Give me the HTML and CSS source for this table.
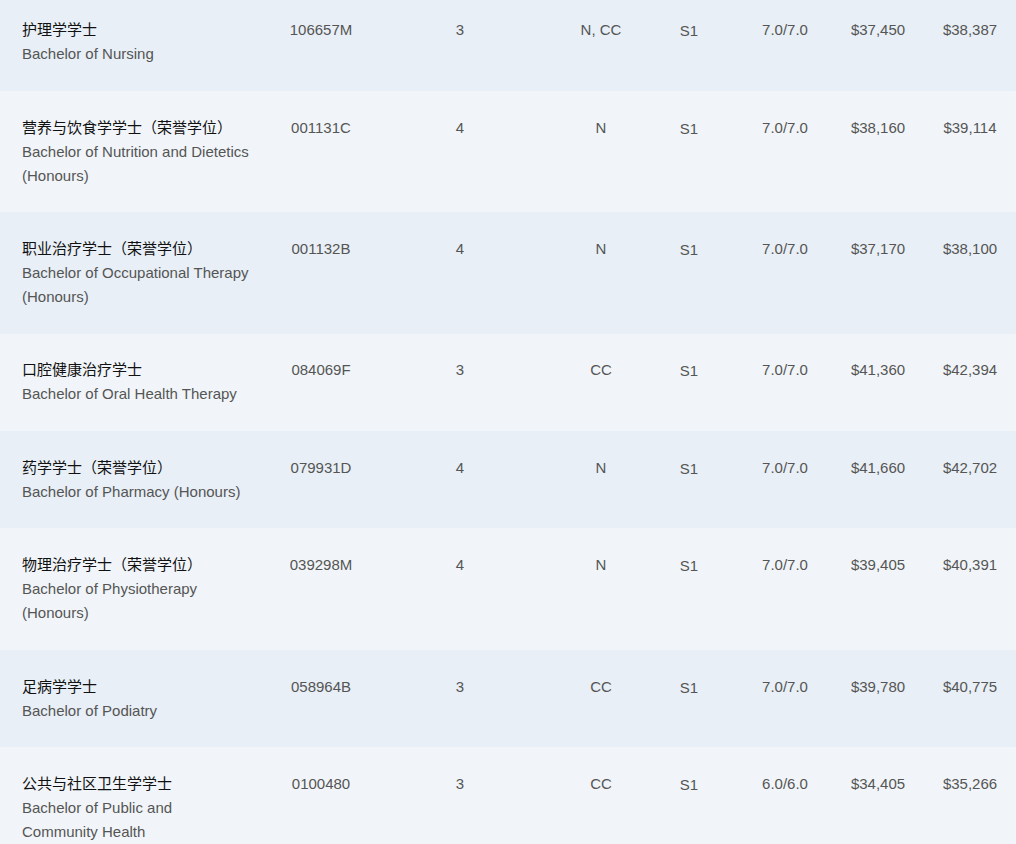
FILE: index.html
```html
<!DOCTYPE html>
<html lang="zh">
<head>
<meta charset="utf-8">
<title>Courses</title>
<link rel="stylesheet" href="styles.css">
</head>
<body>
<table class="courses">
  <colgroup>
    <col class="c-name"><col class="c-code"><col class="c-years"><col class="c-campus">
    <col class="c-intake"><col class="c-ielts"><col class="c-fee1"><col class="c-fee2">
  </colgroup>
  <tbody>
    <tr class="dark">
      <td class="name"><div class="zh">护理学学士</div><div class="en">Bachelor of Nursing</div></td>
      <td>106657M</td><td>3</td><td>N, CC</td><td class="intake">S1</td><td>7.0/7.0</td><td>$37,450</td><td class="last">$38,387</td>
    </tr>
    <tr class="light">
      <td class="name"><div class="zh">营养与饮食学学士（荣誉学位）</div><div class="en">Bachelor of Nutrition and Dietetics (Honours)</div></td>
      <td>001131C</td><td>4</td><td>N</td><td class="intake">S1</td><td>7.0/7.0</td><td>$38,160</td><td class="last">$39,114</td>
    </tr>
    <tr class="dark">
      <td class="name"><div class="zh">职业治疗学士（荣誉学位）</div><div class="en">Bachelor of Occupational Therapy (Honours)</div></td>
      <td>001132B</td><td>4</td><td>N</td><td class="intake">S1</td><td>7.0/7.0</td><td>$37,170</td><td class="last">$38,100</td>
    </tr>
    <tr class="light">
      <td class="name"><div class="zh">口腔健康治疗学士</div><div class="en">Bachelor of Oral Health Therapy</div></td>
      <td>084069F</td><td>3</td><td>CC</td><td class="intake">S1</td><td>7.0/7.0</td><td>$41,360</td><td class="last">$42,394</td>
    </tr>
    <tr class="dark">
      <td class="name"><div class="zh">药学学士（荣誉学位）</div><div class="en">Bachelor of Pharmacy (Honours)</div></td>
      <td>079931D</td><td>4</td><td>N</td><td class="intake">S1</td><td>7.0/7.0</td><td>$41,660</td><td class="last">$42,702</td>
    </tr>
    <tr class="light">
      <td class="name"><div class="zh">物理治疗学士（荣誉学位）</div><div class="en">Bachelor of Physiotherapy (Honours)</div></td>
      <td>039298M</td><td>4</td><td>N</td><td class="intake">S1</td><td>7.0/7.0</td><td>$39,405</td><td class="last">$40,391</td>
    </tr>
    <tr class="dark">
      <td class="name"><div class="zh">足病学学士</div><div class="en">Bachelor of Podiatry</div></td>
      <td>058964B</td><td>3</td><td>CC</td><td class="intake">S1</td><td>7.0/7.0</td><td>$39,780</td><td class="last">$40,775</td>
    </tr>
    <tr class="light">
      <td class="name"><div class="zh">公共与社区卫生学学士</div><div class="en">Bachelor of Public and Community Health</div></td>
      <td>0100480</td><td>3</td><td>CC</td><td class="intake">S1</td><td>6.0/6.0</td><td>$34,405</td><td class="last">$35,266</td>
    </tr>
  </tbody>
</table>
</body>
</html>
```

FILE: styles.css
```css
html, body {
  margin: 0;
  padding: 0;
  background: #f1f5f9;
}

body {
  width: 1016px;
  height: 844px;
  overflow: hidden;
  font-family: "Liberation Sans", Arial, "Noto Sans CJK SC", sans-serif;
  font-size: 15px;
  line-height: 24px;
  color: #555555;
}

.courses {
  width: 1016px;
  table-layout: fixed;
  border-collapse: collapse;
  border-spacing: 0;
  margin-top: -6.4px;
}

.c-name { width: 272px; }
.c-code { width: 98px; }
.c-years { width: 180px; }
.c-campus { width: 102px; }
.c-intake { width: 74px; }
.c-ielts { width: 118px; }
.c-fee1 { width: 68px; }
.c-fee2 { width: 104px; }

.courses td {
  padding: 24.7px 0;
  vertical-align: top;
  text-align: center;
  white-space: nowrap;
}

.courses td.name {
  text-align: left;
  padding-left: 22px;
  padding-right: 21px;
  white-space: normal;
}

.courses td.last {
  padding-left: 12px;
}

.courses td.intake {
  padding-top: 25.7px;
  padding-bottom: 23.7px;
}

.dark { background: #e8eff6; }
.light { background: #f1f5f9; }

.zh {
  color: #111111;
  font-family: "Liberation Sans", "Noto Sans CJK SC", sans-serif;
}

.en {
  color: #555555;
}
```
